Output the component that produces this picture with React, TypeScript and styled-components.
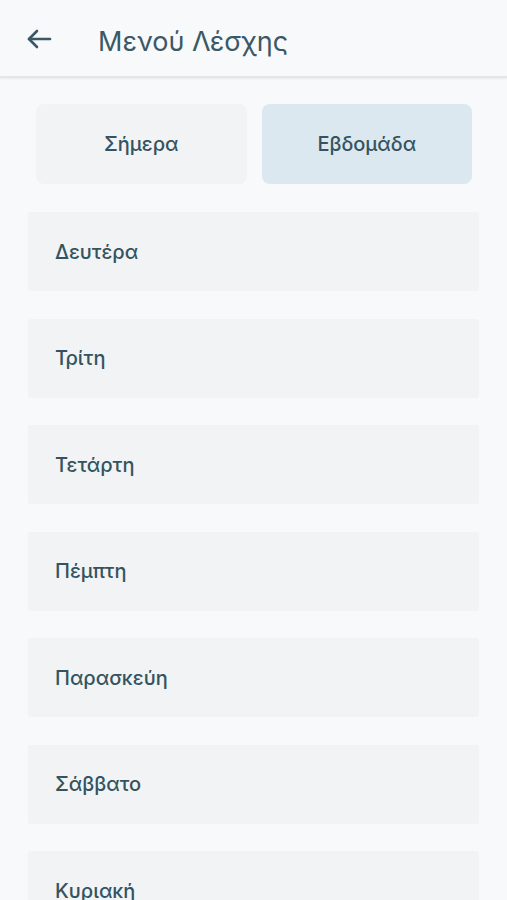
import styled, { createGlobalStyle } from 'styled-components'
import { useState } from 'react'

const GlobalStyle = createGlobalStyle`
  html, body {
    margin: 0;
    padding: 0;
    background: #f8f9fa;
    font-family: Inter, "Noto Sans", sans-serif;
    color: #3b5866;
  }
`

const Page = styled.div`
  width: 507px;
  height: 900px;
  overflow: hidden;
  background: #f8f9fa;
`

const Header = styled.header`
  height: 70px;
  padding: 6px 0 0 26px;
  display: flex;
  align-items: center;
  border-bottom: 2px solid #e3e5e7;
  box-shadow: 0 1px 2px rgba(0, 0, 0, 0.06);
`

const BackButton = styled.button`
  background: none;
  border: none;
  padding: 0;
  width: 26px;
  height: 26px;
  margin-top: -4px;
  display: flex;
  align-items: center;
  justify-content: center;
  color: #3b5866;
  cursor: pointer;
  margin-right: 46px;
`

const Title = styled.h1`
  margin: 0;
  font-size: 27px;
  font-weight: 400;
  color: #3b5866;
`

const Tabs = styled.div`
  display: grid;
  grid-template-columns: 1fr 1fr;
  gap: 15px;
  padding: 26px 35px 0 36px;
`

const Tab = styled.button<{ active: boolean }>`
  height: 80px;
  border: none;
  border-radius: 8px;
  background: ${({ active }) => (active ? '#dce8f0' : '#f1f3f5')};
  font-family: Inter, "Noto Sans", sans-serif;
  font-size: 20px;
  font-weight: 500;
  color: #34535f;
  cursor: pointer;
`

const DayList = styled.div`
  display: flex;
  flex-direction: column;
  gap: 27.5px;
  padding: 28px 28px 0 28px;
`

const DayCard = styled.div`
  height: 79px;
  background: #f1f3f5;
  border-radius: 3px;
  display: flex;
  align-items: center;
  padding-left: 27px;
  font-size: 20px;
  font-weight: 500;
  color: #34535f;
  flex-shrink: 0;
`

const days = ['Δευτέρα', 'Τρίτη', 'Τετάρτη', 'Πέμπτη', 'Παρασκεύη', 'Σάββατο', 'Κυριακή']

export default function App() {
  const [tab, setTab] = useState<'today' | 'week'>('week')

  return (
    <Page>
      <GlobalStyle />
      <Header>
        <BackButton aria-label="back">
          <svg width="26" height="22" viewBox="0 0 26 22" fill="none" stroke="currentColor" strokeWidth="2.6" strokeLinecap="round" strokeLinejoin="round">
            <path d="M24 11H3" />
            <path d="M11 3L3 11L11 19" />
          </svg>
        </BackButton>
        <Title>Μενού Λέσχης</Title>
      </Header>

      <Tabs>
        <Tab active={tab === 'today'} onClick={() => setTab('today')}>Σήμερα</Tab>
        <Tab active={tab === 'week'} onClick={() => setTab('week')}>Εβδομάδα</Tab>
      </Tabs>

      <DayList>
        {days.map((d) => (
          <DayCard key={d}>{d}</DayCard>
        ))}
      </DayList>
    </Page>
  )
}
